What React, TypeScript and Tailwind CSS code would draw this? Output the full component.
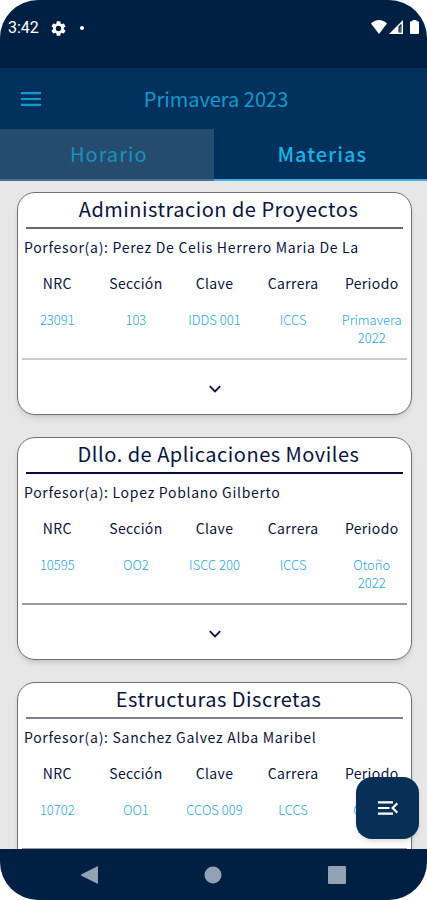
import { useState } from "react"

interface Subject {
  name: string
  teacher: string
  nrc: string
  section: string
  code: string
  degree: string
  term: string
  year: string
  titleRule: string
  footerRule: string
}

const subjects: Subject[] = [
  {
    name: "Administracion de Proyectos",
    teacher: "Perez De Celis Herrero Maria De La",
    nrc: "23091",
    section: "103",
    code: "IDDS 001",
    degree: "ICCS",
    term: "Primavera",
    year: "2022",
    titleRule: "border-b-2 border-[#66667f]",
    footerRule: "border-b-2 border-[#cbcbcb]",
  },
  {
    name: "Dllo. de Aplicaciones Moviles",
    teacher: "Lopez Poblano Gilberto",
    nrc: "10595",
    section: "OO2",
    code: "ISCC 200",
    degree: "ICCS",
    term: "Otoño",
    year: "2022",
    titleRule: "border-b-2 border-[#0b0b3b]",
    footerRule: "border-b-2 border-[#999999]",
  },
  {
    name: "Estructuras Discretas",
    teacher: "Sanchez Galvez Alba Maribel",
    nrc: "10702",
    section: "OO1",
    code: "CCOS 009",
    degree: "LCCS",
    term: "Otoño",
    year: "2022",
    titleRule: "border-b-2 border-[#7e7e90]",
    footerRule: "border-b-2 border-[#999999]",
  },
]

const columns = ["NRC", "Sección", "Clave", "Carrera", "Periodo"]

function StatusBar() {
  return (
    <div className="flex h-[68px] shrink-0 items-start justify-between bg-[#002043] pt-4 pr-2 pl-2 text-white">
      <div className="flex h-6 items-center">
        <span className="font-[Roboto,sans-serif] text-base">3:42</span>
        <svg className="ml-3 h-[15px] w-[15px]" viewBox="2 2 20 20" fill="currentColor">
          <path d="M19.14 12.94c.04-.3.06-.61.06-.94 0-.32-.02-.64-.07-.94l2.03-1.58a.49.49 0 0 0 .12-.61l-1.92-3.32a.49.49 0 0 0-.59-.22l-2.39.96c-.5-.38-1.03-.7-1.62-.94l-.36-2.54a.48.48 0 0 0-.48-.41h-3.84c-.24 0-.43.17-.47.41l-.36 2.54c-.59.24-1.13.57-1.62.94l-2.39-.96a.49.49 0 0 0-.59.22L2.74 8.87c-.12.21-.08.47.12.61l2.03 1.58c-.05.3-.09.63-.09.94s.02.64.07.94l-2.03 1.58a.49.49 0 0 0-.12.61l1.92 3.32c.12.22.37.29.59.22l2.39-.96c.5.38 1.03.7 1.62.94l.36 2.54c.05.24.24.41.48.41h3.84c.24 0 .44-.17.47-.41l.36-2.54c.59-.24 1.13-.56 1.62-.94l2.39.96c.22.08.47 0 .59-.22l1.92-3.32a.49.49 0 0 0-.12-.61l-2.01-1.58zM12 15.6A3.6 3.6 0 1 1 12 8.4a3.6 3.6 0 0 1 0 7.2z" />
        </svg>
        <span className="ml-3.5 h-1 w-1 rounded-full bg-white" />
      </div>
      <div className="flex h-[22px] items-center">
        <svg className="h-[14px] w-4" viewBox="0 0 16 14" fill="currentColor">
          <path d="M8 14 0 3.6C2.2 1.3 5 0 8 0s5.800 1.300 8 3.600z" />
        </svg>
        <svg className="ml-0.5 h-[14px] w-[14px]" viewBox="0 0 14 14">
          <path d="M0 14 14 0v14z" fill="#fff" />
          <path d="M9.500 6.500 12.500 3.500v9h-3z" fill="#002043" />
          <path d="M10.700 6.500h.9v6h-.9z" fill="#8090a1" />
        </svg>
        <svg className="ml-[7px] h-[14px] w-[9px]" viewBox="0 0 9 14" fill="currentColor">
          <path d="M2.500 1.300V0h4v1.300H8a1 1 0 0 1 1 1V13a1 1 0 0 1-1 1H1a1 1 0 0 1-1-1V2.300a1 1 0 0 1 1-1z" />
        </svg>
      </div>
    </div>
  )
}

function SubjectCard({ subject }: { subject: Subject }) {
  return (
    <article className="shrink-0 rounded-[18px] border border-[#6f7079] bg-white shadow-md">
      <h2
        className={`mx-2 pb-0.5 pl-2 text-center text-xl leading-8 tracking-wide ${subject.titleRule}`}
      >
        {subject.name}
      </h2>
      <p className="truncate px-1.5 py-2 text-sm leading-5 tracking-wider">
        Porfesor(a): {subject.teacher}
      </p>

      <table className="w-full table-fixed text-center">
        <thead>
          <tr>
            {columns.map((column) => (
              <th key={column} className="pt-2 pb-[18px] text-sm leading-5 font-normal tracking-wide">
                {column}
              </th>
            ))}
          </tr>
        </thead>
        <tbody className="align-top text-[13px] leading-[18px] font-light text-[#2aa5de]">
          <tr>
            <td>{subject.nrc}</td>
            <td>{subject.section}</td>
            <td>{subject.code}</td>
            <td>{subject.degree}</td>
            <td className="pb-[11px]">
              {subject.term}
              <br />
              {subject.year}
            </td>
          </tr>
        </tbody>
      </table>

      <div className={`mx-1 ${subject.footerRule}`} />
      <button
        type="button"
        aria-label="Mostrar detalles"
        className="flex h-[54px] w-full items-center justify-center pt-1"
      >
        <svg className="h-2 w-3" viewBox="0 0 12 8" fill="none" stroke="currentColor" strokeWidth="1.8">
          <path d="m.8 1.200 5.200 5.200 5.200-5.200" />
        </svg>
      </button>
    </article>
  )
}

export default function App() {
  const [tab, setTab] = useState("Materias")

  return (
    <div className="h-screen bg-white font-['Noto_Sans_CJK_SC','Noto_Sans',sans-serif] text-[#0a1440]">
      <div className="relative flex h-full flex-col overflow-hidden rounded-[38px] bg-[#e7e7e7]">
        <StatusBar />

        {/* Title bar */}
        <header className="grid h-[61px] shrink-0 grid-cols-[1fr_auto_1fr] items-center bg-[#00305c] pr-4 pl-[21px] text-[#109bcb]">
          <button type="button" aria-label="Menú" className="w-fit">
            <svg className="h-[14px] w-5" viewBox="0 0 20 14" fill="currentColor">
              <path d="M0 0h20v2.200H0zM0 5.900h20v2.200H0zM0 11.800h20V14H0z" />
            </svg>
          </button>
          <h1 className="text-xl">Primavera 2023</h1>
        </header>

        <nav className="flex h-[52px] shrink-0">
          {["Horario", "Materias"].map((name) => (
            <button
              key={name}
              type="button"
              onClick={() => setTab(name)}
              className={
                tab === name
                  ? "flex-1 border-b-2 border-[#3eaee0] bg-[#00305c] pl-1 text-xl font-medium tracking-wider text-[#12b5e5]"
                  : "flex-1 border-b-2 border-[#4b6f91] bg-[#254b6e] pl-1 text-xl tracking-wider text-[#1693bd]"
              }
            >
              {name}
            </button>
          ))}
        </nav>

        {/* Subject list */}
        <main className="flex min-h-0 flex-1 flex-col gap-[22px] overflow-y-auto pt-[11px] pr-[15px] pb-6 pl-[17px] [scrollbar-width:none]">
          {subjects.map((subject) => (
            <SubjectCard key={subject.nrc} subject={subject} />
          ))}
        </main>

        <footer className="relative flex h-[51px] shrink-0 items-center justify-around bg-[#002043] px-7 text-[#93a1b3]">
          <button
            type="button"
            aria-label="Abrir opciones"
            className="absolute right-2 bottom-[61px] flex h-[62px] w-[63px] items-center justify-center rounded-2xl bg-[#082f55] text-white shadow-md"
          >
            <svg className="h-[14px] w-5" viewBox="0 0 20 14" fill="none" stroke="currentColor" strokeWidth="2.200">
              <path d="M0 1.300h15M0 7h11.500M0 12.700h15M19.300 2.300 14.600 7l4.700 4.700" />
            </svg>
          </button>
          <button type="button" aria-label="Atrás">
            <svg className="h-[18px] w-[18px]" viewBox="0 0 18 18" fill="currentColor">
              <path d="M17 0v18L0 9.500v-1z" />
            </svg>
          </button>
          <button type="button" aria-label="Inicio">
            <svg className="h-[18px] w-[18px]" viewBox="0 0 18 18" fill="currentColor">
              <circle cx="9" cy="9" r="8.500" />
            </svg>
          </button>
          <button type="button" aria-label="Recientes">
            <svg className="h-[18px] w-[18px]" viewBox="0 0 18 18" fill="currentColor">
              <rect width="18" height="18" rx="1" />
            </svg>
          </button>
        </footer>
      </div>
    </div>
  )
}
